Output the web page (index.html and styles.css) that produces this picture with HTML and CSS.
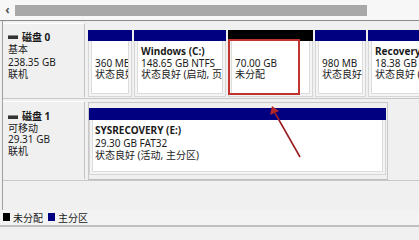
FILE: index.html
```html
<!DOCTYPE html>
<html lang="zh-CN">
<head>
<meta charset="utf-8">
<link rel="stylesheet" href="styles.css">
</head>
<body>
<div class="screen">
  <div class="hscroll">
    <span class="arrow">&#8249;</span>
    <div class="thumb"></div>
  </div>
  <div class="view">
    <div class="row row0">
      <div class="label">
        <div class="title"><span class="dicon"></span>磁盘 0</div>
        <div>基本</div>
        <div>238.35 GB</div>
        <div>联机</div>
      </div>
      <div class="parts">
        <div class="part w1"><div class="bar"></div><div class="body"><div class="inner"><div>&nbsp;</div><div>360 MB</div><div>状态良好</div></div></div></div>
        <div class="part w2"><div class="bar"></div><div class="body"><div class="inner"><div class="name">Windows (C:)</div><div>148.65 GB NTFS</div><div>状态良好 (启动, 页面</div></div></div></div>
        <div class="part w3"><div class="bar black"></div><div class="body"><div class="inner"><div>&nbsp;</div><div>70.00 GB</div><div>未分配</div></div></div></div>
        <div class="part w4"><div class="bar"></div><div class="body"><div class="inner"><div>&nbsp;</div><div>980 MB</div><div>状态良好 (</div></div></div></div>
        <div class="part w5"><div class="bar"></div><div class="body"><div class="inner"><div class="name">Recovery P</div><div>18.38 GB NTFS</div><div>状态良好 (OEM</div></div></div></div>
      </div>
    </div>
    <div class="row row1">
      <div class="label">
        <div class="title"><span class="dicon"></span>磁盘 1</div>
        <div>可移动</div>
        <div>29.31 GB</div>
        <div>联机</div>
      </div>
      <div class="parts1">
        <div class="part wide"><div class="bar"></div><div class="body"><div class="inner"><div class="name">SYSRECOVERY (E:)</div><div>29.30 GB FAT32</div><div>状态良好 (活动, 主分区)</div></div></div></div>
      </div>
    </div>
    <div class="spacer"></div>
    <div class="legend">
      <span class="sw black"></span><span class="lt">未分配</span>
      <span class="sw navy"></span><span class="lt">主分区</span>
    </div>
  </div>
  <div class="redbox"></div>
  <svg class="pointer" width="419" height="240" viewBox="0 0 419 240">
    <line x1="300" y1="157" x2="275" y2="113" stroke="#9a1f22" stroke-width="1.6"/>
    <polygon points="272,106 270,115 279,111" fill="#b3262a"/>
  </svg>
</div>
</body>
</html>
```
FILE: styles.css
```css
html, body {
  margin: 0;
  padding: 0;
}
body {
  width: 419px;
  height: 240px;
  overflow: hidden;
  background: #f0f0f0;
  font-family: "Noto Sans", "Noto Sans CJK SC", sans-serif;
  font-size: 10px;
  color: #1a1a1a;
}
.screen {
  position: relative;
  width: 419px;
  height: 240px;
}
.hscroll {
  background: #f7f7f7;
  border-bottom: 1px solid #8a8a8a;
  display: flex;
  align-items: center;
  box-sizing: border-box;
  height: 21px;
}
.arrow {
  width: 15px;
  text-align: center;
  font-size: 12px;
  font-weight: bold;
  color: #555;
  line-height: 12px;
}
.thumb {
  width: 352px;
  height: 11px;
  background: #a8a8a8;
}
.view {
  margin-left: 2px;
  border-left: 1px solid #a0a0a0;
  height: 206px;
  display: flex;
  flex-direction: column;
}
.row {
  display: flex;
  border-bottom: 1px solid #c8c8c8;
  box-sizing: border-box;
}
.row0 { height: 79px; }
.row1 { height: 83px; }
.label {
  width: 82px;
  margin: 2px 3px 1px 0;
  background: #f0f0f0;
  border-right: 1px solid #c4c4c4;
  border-top: 1px solid #fff;
  line-height: 12.3px;
  padding-left: 5px;
  box-sizing: border-box;
}
.row0 .label { padding-top: 7px; }
.row1 .label { padding-top: 9px; line-height: 11.5px; }
.title {
  font-weight: bold;
  display: flex;
  align-items: center;
}
.dicon {
  display: inline-block;
  width: 10px;
  height: 3px;
  background: #333;
  margin-right: 4px;
  border-top: 1px solid #888;
}
.parts {
  display: flex;
  gap: 2px;
  padding-top: 9px;
  padding-bottom: 1px;
  flex: 1;
  overflow: hidden;
}
.part {
  display: flex;
  flex-direction: column;
  flex: none;
}
.w1 { width: 44px; }
.w2 { width: 92px; }
.w3 { width: 85px; }
.w4 { width: 51px; }
.w5 { width: 60px; }
.bar {
  height: 11px;
  background: #000080;
}
.bar.black { background: #000; }
.body {
  flex: 1;
  background: #f4f4f4;
  border: 1px solid #d6d6d6;
  border-top: none;
  padding: 0 2px 2px 2px;
  overflow: hidden;
}
.inner {
  height: 100%;
  background: #fff;
  border: 1px solid #dcdcdc;
  border-top: none;
  box-sizing: border-box;
  padding: 5px 0 0 3px;
  line-height: 11.7px;
  white-space: nowrap;
  overflow: hidden;
}
.name { font-weight: bold; }
.parts1 {
  width: 300px;
  border: 1px solid #c8c8c8;
  border-bottom-color: #bdbdbd;
  margin-top: 3px;
  padding: 5px 3px 4px 0;
  display: flex;
  box-sizing: border-box;
}
.wide { width: 297px; }
.wide .bar { height: 12px; }
.wide .inner { padding-top: 4px; line-height: 12.5px; padding-left: 2px; }
.spacer { height: 29px; }
.legend {
  height: 15px;
  background: #f3f3f3;
  border-bottom: 2px solid #bfbfbf;
  display: flex;
  align-items: center;
  padding-left: 3px;
  margin-left: -3px;
}
.sw {
  width: 7px;
  height: 8px;
  margin-right: 3px;
}
.sw.black { background: #000; }
.sw.navy { background: #000080; margin-left: 5px; }
.lt { font-size: 10px; }
.redbox {
  position: absolute;
  left: 228px;
  top: 39px;
  width: 68px;
  height: 52px;
  border: 2px solid #c0332e;
}
.pointer {
  position: absolute;
  left: 0;
  top: 0;
}
```
